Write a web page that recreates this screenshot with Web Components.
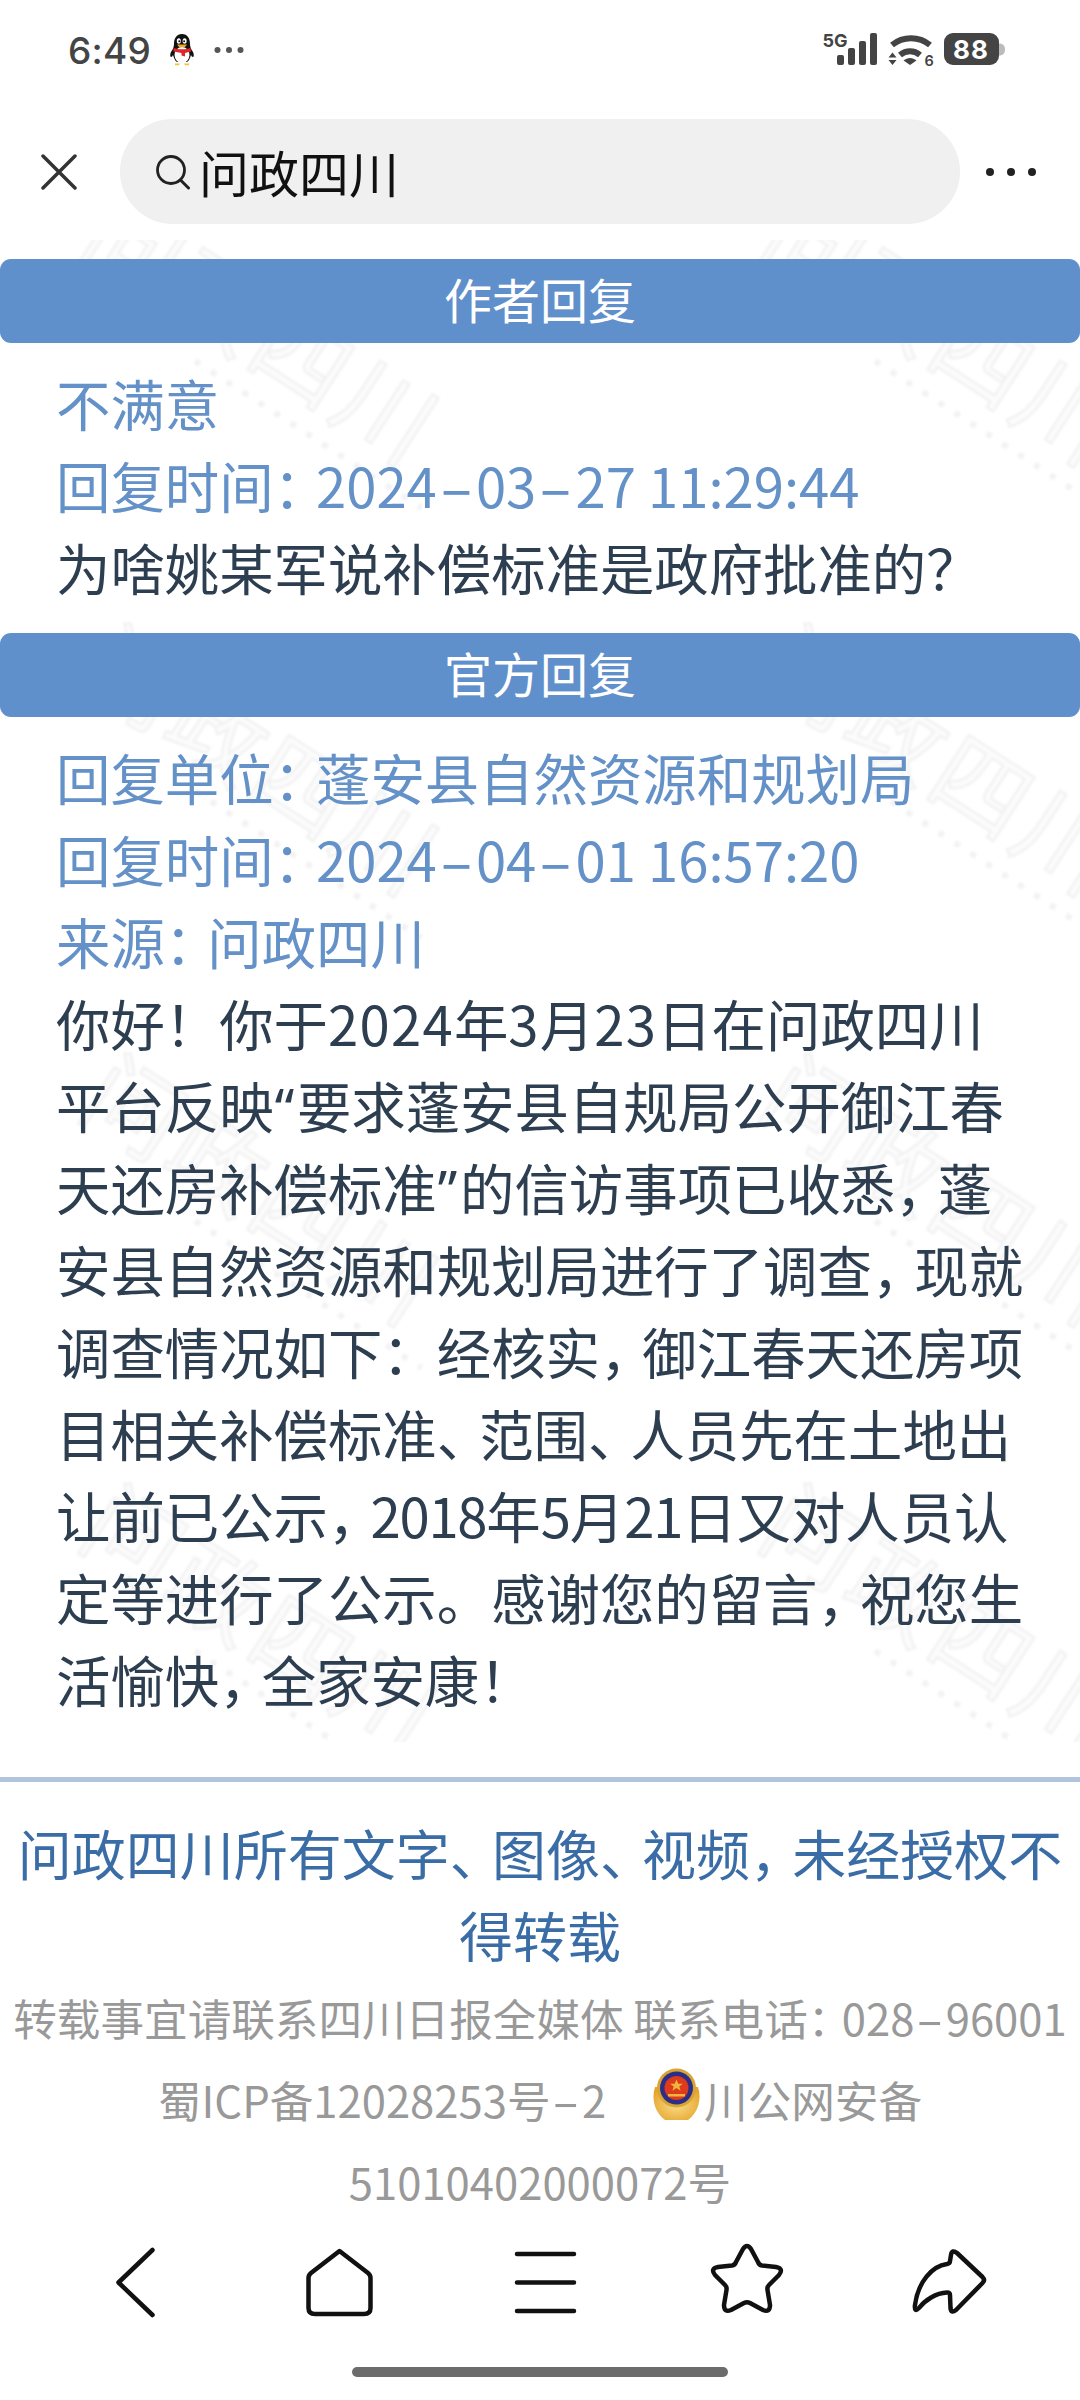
<!DOCTYPE html>
<html lang="zh-CN">
<head>
<meta charset="utf-8">
<title>问政四川</title>
<style>
html,body{margin:0;padding:0;background:#fff}
body{width:1080px;height:2400px;overflow:hidden;font-family:"Noto Sans CJK SC","Noto Sans",sans-serif;color:#2c3e50}
</style>
</head>
<body>
<x-page>
  <x-status></x-status>
  <x-search>问政四川</x-search>
  <x-content>
    <x-banner>作者回复</x-banner>
    <x-section>
      <x-line tone="blue">不满意</x-line>
      <x-line tone="blue">回复时间<x-p>&#xFF1A;</x-p>2024<x-hy>-</x-hy>03<x-hy>-</x-hy>27 11:29:44</x-line>
      <x-line>为啥姚某军说补偿标准是政府批准的&#xFF1F;</x-line>
    </x-section>
    <x-banner>官方回复</x-banner>
    <x-section>
      <x-line tone="blue">回复单位<x-p>&#xFF1A;</x-p>蓬安县自然资源和规划局</x-line>
      <x-line tone="blue">回复时间<x-p>&#xFF1A;</x-p>2024<x-hy>-</x-hy>04<x-hy>-</x-hy>01 16:57:20</x-line>
      <x-line tone="blue">来源<x-p>&#xFF1A;</x-p>问政四川</x-line>
      <x-line>你好&#xFF01;你于<x-d wide>2024</x-d>年<x-d wide>3</x-d>月<x-d wide>23</x-d>日在问政四川</x-line>
      <x-line>平台反映<x-q>&#x201C;</x-q>要求蓬安县自规局公开御江春</x-line>
      <x-line>天还房补偿标准<x-q>&#x201D;</x-q>的信访事项已收悉<x-p>&#xFF0C;</x-p>蓬</x-line>
      <x-line>安县自然资源和规划局进行了调查<x-p>&#xFF0C;</x-p>现就</x-line>
      <x-line>调查情况如下&#xFF1A;经核实<x-p>&#xFF0C;</x-p>御江春天还房项</x-line>
      <x-line>目相关补偿标准<x-p>&#x3001;</x-p>范围<x-p>&#x3001;</x-p>人员先在土地出</x-line>
      <x-line>让前已公示<x-p>&#xFF0C;</x-p><x-d>2018</x-d>年<x-d>5</x-d>月<x-d>21</x-d>日又对人员认</x-line>
      <x-line>定等进行了公示。感谢您的留言<x-p>&#xFF0C;</x-p>祝您生</x-line>
      <x-line>活愉快<x-p>&#xFF0C;</x-p>全家安康&#xFF01;</x-line>
    </x-section>
  </x-content>
  <x-footer>
    <span slot="title">问政四川所有文字<x-p>&#x3001;</x-p>图像<x-p>&#x3001;</x-p>视频<x-p>&#xFF0C;</x-p>未经授权不<br>得转载</span>
    <span slot="l1">转载事宜请联系四川日报全媒体 联系电话<x-p>&#xFF1A;</x-p>028<x-hy>-</x-hy>96001</span>
    <span slot="l2a">蜀ICP备12028253号<x-hy>-</x-hy>2</span>
    <span slot="l2b">川公网安备</span>
    <span slot="l3">51010402000072号</span>
  </x-footer>
  <x-nav></x-nav>
</x-page>
<script>
function def(name, html){
  const t=document.createElement('template');
  t.innerHTML=html;
  customElements.define(name,class extends HTMLElement{
    constructor(){super();this.attachShadow({mode:'open'}).appendChild(t.content.cloneNode(true));}
  });
}
def('x-page',`<style>:host{display:block;width:1080px;height:2400px;overflow:hidden;background:#fff}</style><slot></slot>`);

def('x-p',`<style>:host{display:inline;letter-spacing:-.22em}</style><slot></slot>`);
def('x-d',`<style>:host{display:inline;letter-spacing:-1.2px}:host([wide]){letter-spacing:1.3px}</style><slot></slot>`);
def('x-q',`<style>:host{display:inline;font-family:"Noto Sans",sans-serif;padding:0 .05em 0 .02em}</style><slot></slot>`);
def('x-hy',`<style>:host{display:inline-block;width:.72em;text-align:center;transform:scaleX(1.85)}</style><slot></slot>`);

def('x-status',`<style>
:host{display:flex;align-items:center;height:100px;padding-left:68px;box-sizing:border-box;position:relative}
.t{font:500 37px/1 Inter,"Noto Sans",sans-serif;color:#444;width:78px;letter-spacing:.2px}
.q{margin-left:23px;display:block}
.d{margin-left:19px;display:block}
.r{margin-left:auto;margin-right:70px;display:block}
</style>
<span class="t">6:49</span>
<svg class="q" width="26" height="34" viewBox="0 0 26 34">
  <path d="M13 1C7.500 1 5 5.500 5 11c0 3-1 5-3 8-1 2-1 5 0 5 1 0 1.500-1 2-2 1 3 2 6 4 7h10c2-1 3-4 4-7 .5 1 1 2 2 2 1 0 1-3 0-5-2-3-3-5-3-8 0-5.500-2.500-10-8-10z" fill="#111"/>
  <ellipse cx="13" cy="22" rx="7.500" ry="8" fill="#fff"/>
  <ellipse cx="9.800" cy="8" rx="2" ry="2.800" fill="#fff"/><ellipse cx="15.600" cy="8" rx="2" ry="2.800" fill="#fff"/>
  <circle cx="10.300" cy="8.300" r="1" fill="#111"/><circle cx="15.100" cy="8.300" r="1" fill="#111"/>
  <path d="M8 11.500h10l-2 2.500h-6z" fill="#f2a81c"/>
  <path d="M4.500 15c5 1.800 12 1.800 17 0l.5 3.500-6 1.500v3.500l-3.500-1v-2.500l-8-1.500z" fill="#e0262a"/>
  <path d="M6 30.500h5l-1 1.800H6zM15 30.500h5v1.800h-4z" fill="#f2c23c"/>
</svg>
<svg class="d" width="30" height="8" viewBox="0 0 30 8"><circle cx="3.500" cy="4" r="3" fill="#555"/><circle cx="15" cy="4" r="3" fill="#555"/><circle cx="26.500" cy="4" r="3" fill="#555"/></svg>
<svg class="r" width="190" height="40" viewBox="820 30 190 40">
  <text x="822.500" y="46.500" font-family="Inter,Noto Sans,sans-serif" font-weight="700" font-size="18" fill="#444">5G</text>
  <rect x="837" y="55" width="7" height="10" rx="2" fill="#444"/>
  <rect x="848" y="48" width="7" height="17" rx="2" fill="#444"/>
  <rect x="859" y="41" width="7" height="24" rx="2" fill="#444"/>
  <rect x="870" y="33" width="7" height="32" rx="2" fill="#444"/>
  <path d="M892 45c11-9 27-9 38 0" fill="none" stroke="#444" stroke-width="6"/>
  <path d="M900 55c6-5 14-5 20 0" fill="none" stroke="#444" stroke-width="6"/>
  <path d="M903.500 60.500c4-3.500 9-3.500 13 0l-6.500 4.500z" fill="#444"/>
  <path d="M892.500 52.500l4 5h-8zM892.500 65l-4-5h8z" fill="#444"/>
  <text x="924.500" y="66" font-family="Inter,Noto Sans,sans-serif" font-weight="600" font-size="14.500" fill="#444">6</text>
  <path d="M998 43.500h2.500q4.500 1 4.500 6t-4.500 6H998z" fill="#bbb"/>
  <rect x="944" y="33" width="55" height="32" rx="9" fill="#444"/>
  <text x="971" y="59" text-anchor="middle" font-family="Inter,Noto Sans,sans-serif" font-weight="700" font-size="26" fill="#fff" letter-spacing="1">88</text>
</svg>`);

def('x-search',`<style>
:host{display:flex;align-items:center;height:105px;margin-top:19px;padding-left:41px;box-sizing:border-box;font-size:50px;color:#111}
.x{display:block;flex:none;margin-right:43px}
.pill{display:flex;align-items:center;width:840px;height:105px;border-radius:53px;background:#f0f0f0;box-sizing:border-box;padding-left:35px;flex:none}
.g{display:block;margin-right:8px;flex:none}
.more{display:flex;gap:13px;margin-left:26px}
.more i{display:block;width:8px;height:8px;border-radius:50%;background:#222}
.txt{line-height:1;position:relative;top:-1px}
</style>
<svg class="x" width="36" height="36" viewBox="0 0 36 36"><path d="M2 2l32 32M34 2L2 34" stroke="#333" stroke-width="3.500" stroke-linecap="round" fill="none"/></svg>
<div class="pill">
  <svg class="g" width="36" height="36" viewBox="0 0 36 36"><circle cx="16" cy="16" r="13.500" fill="none" stroke="#222" stroke-width="2.800"/><path d="M25.500 26l8 8" stroke="#222" stroke-width="3" stroke-linecap="round"/></svg>
  <span class="txt"><slot></slot></span>
</div>
<div class="more"><i></i><i></i><i></i></div>`);

def('x-content',`<style>
:host{display:block;position:relative;margin-top:16px;padding-top:19px;height:1502px;box-sizing:border-box;overflow:hidden}
.wm{position:absolute;left:0;top:0;display:block}
.c{position:relative}
</style>
<svg class="wm" width="1080" height="1502" viewBox="0 0 1080 1502">
  <defs>
    <filter id="bl" x="-5%" y="-5%" width="110%" height="110%"><feGaussianBlur stdDeviation="1"/></filter>
    <pattern id="w" x="0" y="-60" width="680" height="430" patternUnits="userSpaceOnUse">
      <g transform="translate(75 72) rotate(33)" filter="url(#bl)">
        <text x="0" y="0" font-family="Noto Sans CJK SC,sans-serif" font-size="95" letter-spacing="5" fill="#fcfcfc" stroke="#f2f2f2" stroke-width="2.500">问政四川</text>
        <line x1="160" y1="26" x2="430" y2="26" stroke="#f3f3f3" stroke-width="6" stroke-dasharray="6 13"/>
      </g>
    </pattern>
  </defs>
  <rect width="1080" height="1502" fill="url(#w)"/>
</svg>
<div class="c"><slot></slot></div>`);

def('x-banner',`<style>
:host{display:block;height:84px;line-height:78px;background:#6090cb;border-radius:11px;color:#fff;text-align:center;font-size:48px}
</style><slot></slot>`);

def('x-section',`<style>
:host{display:block;padding:19px 0 25px 56px}
</style><slot></slot>`);

def('x-line',`<style>
:host{display:block;height:82px;line-height:82px;font-size:54.4px;color:#2c3e50;white-space:nowrap}
:host([tone=blue]){color:#6492c8}
</style><slot></slot>`);

def('x-footer',`<style>
:host{display:block;margin-top:35px;border-top:5px solid #b0c4de;padding:30px 0 2px;text-align:center}
.t{font-size:54px;line-height:82px;color:#3a6ca6;white-space:nowrap}
.g{font-size:43.6px;line-height:82px;height:82px;color:#999;white-space:nowrap}
svg{vertical-align:-3px;margin-left:46px;margin-right:3px}
</style>
<div class="t"><slot name="title"></slot></div>
<div class="g"><slot name="l1"></slot></div>
<div class="g"><slot name="l2a"></slot><svg width="49" height="54" viewBox="0 0 49 54">
  <defs><radialGradient id="gd" cx=".5" cy=".55" r=".6"><stop offset="0" stop-color="#f8dc88"/><stop offset="1" stop-color="#e6a52c"/></radialGradient>
  <filter id="soft" x="-10%" y="-10%" width="120%" height="120%"><feGaussianBlur stdDeviation=".7"/></filter></defs>
  <g filter="url(#soft)">
    <path d="M3 20C-1 32 3 46 13 53h23c10-7 14-21 10-33z" fill="url(#gd)"/>
    <circle cx="24.500" cy="21" r="19.500" fill="#d9a436"/>
    <circle cx="24.500" cy="21" r="16.500" fill="#2c2f86"/>
    <circle cx="24.500" cy="21" r="12" fill="#dd3a1c"/>
    <path d="M24.500 12.500l1.800 4.300h4.500l-3.500 2.700 1.300 4.300-4.100-2.700-4.100 2.700 1.300-4.300-3.500-2.700h4.500z" fill="#f0b53c"/>
    <path d="M16 27h17v2.500H16z" fill="#f0b53c"/>
  </g>
</svg><slot name="l2b"></slot></div>
<div class="g"><slot name="l3"></slot></div>`);

def('x-nav',`<style>
:host{display:block}
.row{display:grid;grid-template-columns:repeat(5,205px);padding:16px 0 0 32px;height:143px;box-sizing:border-box}
.row div{display:flex;justify-content:center}
svg{display:block;overflow:visible}
path{fill:none;stroke:#111;stroke-width:4.500;stroke-linecap:round;stroke-linejoin:round}
.home{display:block;width:376px;height:10px;border-radius:5px;background:#6c6c6c;margin:0 0 0 352px}
</style>
<div class="row">
  <div><svg width="80" height="80" viewBox="0 0 80 80"><path d="M57.500 10L23.500 42.500 57.500 75"/></svg></div>
  <div><svg width="80" height="80" viewBox="1 0 80 80"><path d="M40.500 11L69 33Q71.500 35 71.500 38V68Q71.500 74 65 74H16Q9.500 74 9.500 68V38Q9.500 35 12 33Z"/></svg></div>
  <div><svg width="80" height="80" viewBox="0 0 80 80"><path d="M12 14H69M12 42.500H69M12 71H69"/></svg></div>
  <div><svg width="80" height="80" viewBox="0 0 80 80"><path d="M33 9Q37 3 41 9L48 22Q49 25 52 25.500L66 27Q74 28.500 69 35L59 45Q57 47 57.500 50L60 65Q60 73 53 70L40 63Q37 61.500 34 63L21 70Q14 73 14 65L16.500 50Q17 47 15 45L5 35Q0 28.500 8 27L22 25.500Q25 25 26 22Z"/></svg></div>
  <div><svg width="80" height="80" viewBox="1 0 80 80"><path d="M37 15Q38 9 43 13L68.500 37Q71.500 40 68.500 43L42 70Q37 74 36.500 68L36 55Q36 52.500 33 52.500C22 53 11 60 5 68Q0 73 1 65C4 42 18 26 33 24Q36 23.500 36 21Z"/></svg></div>
</div>
<span class="home"></span>`);
</script>
</body>
</html>
